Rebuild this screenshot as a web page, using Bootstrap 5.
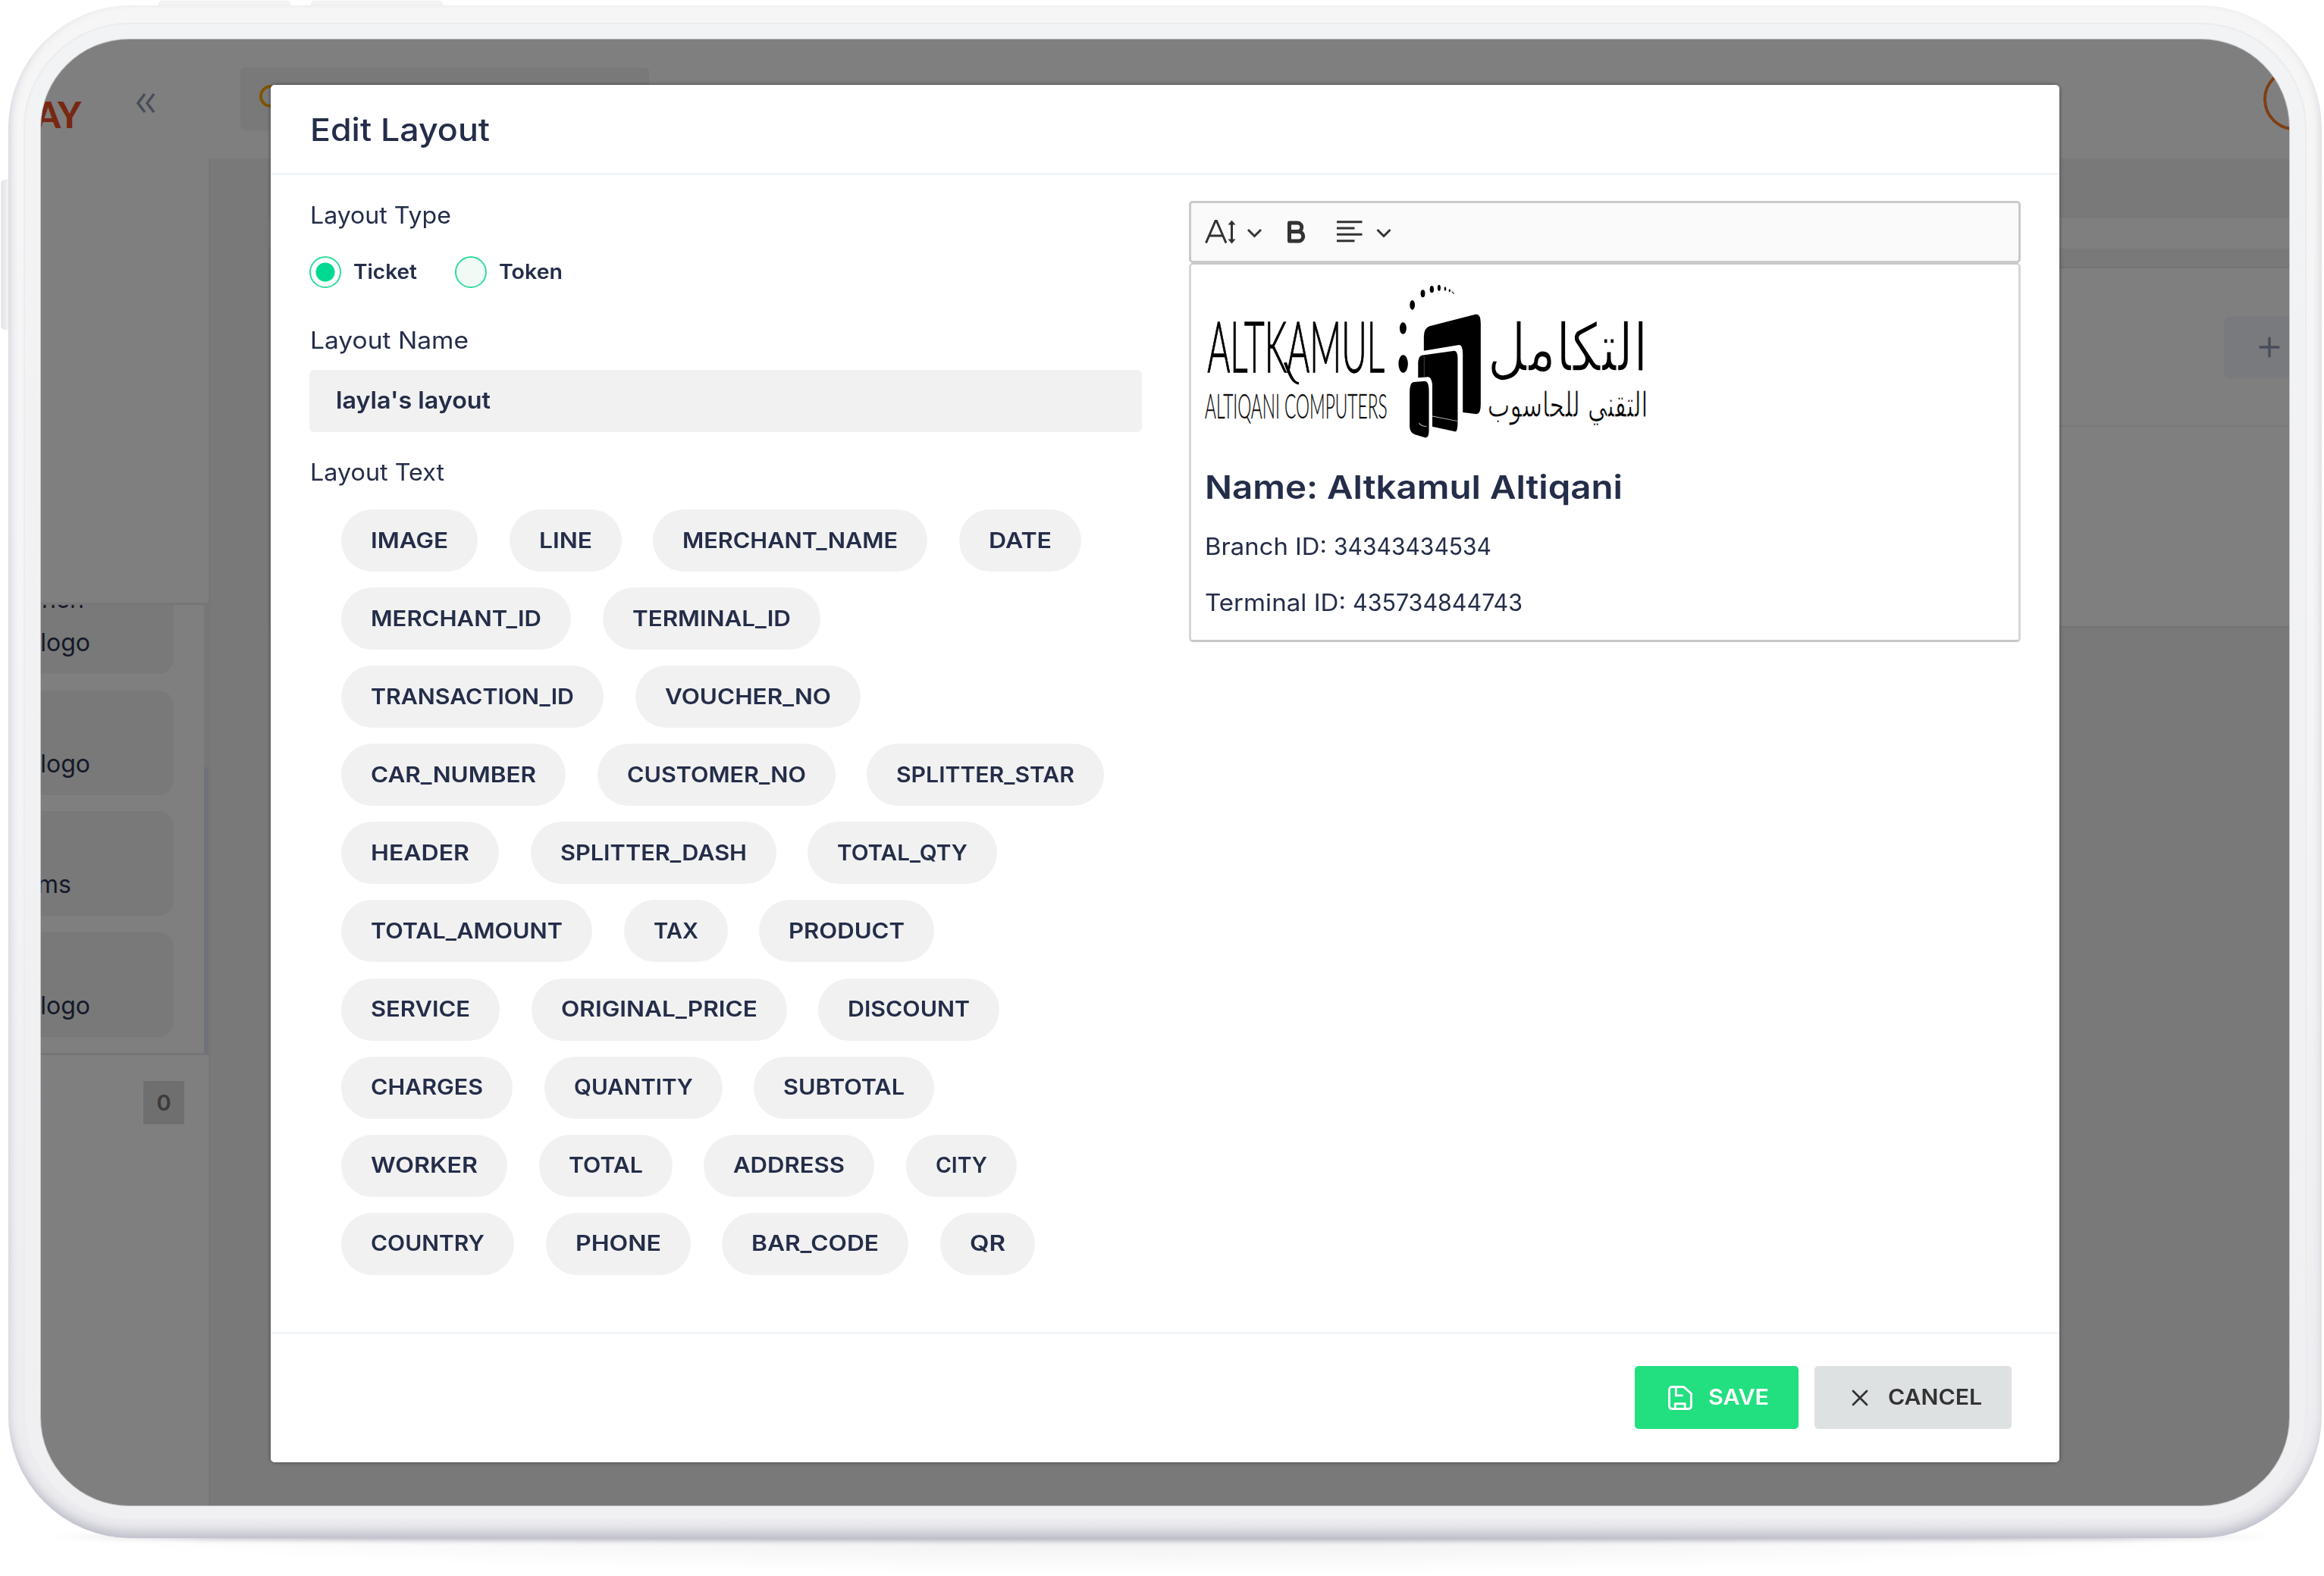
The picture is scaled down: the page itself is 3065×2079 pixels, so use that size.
<!DOCTYPE html>
<html lang="en">
<head>
<meta charset="utf-8">
<title>Edit Layout</title>
<link href="https://cdn.jsdelivr.net/npm/bootstrap@5.3.0/dist/css/bootstrap.min.css" rel="stylesheet">
<style>
  :root { --ink: #242d49; --soft: #f1f1f1; }
  body { width: 3065px; height: 2079px; overflow: hidden; background: #fff; color: var(--ink);
         font-family: Inter, "Noto Sans", sans-serif; position: relative; }

  /* tablet */
  .tablet { position: absolute; left: 11px; top: 7px; width: 3051px; height: 2022px; padding: 23px 20px; border-radius: 162px;
            background: linear-gradient(#f6f6f6, #f4f4f5 50%, #ececf0);
            box-shadow: inset 0 -14px 16px -6px #bcbcc8, inset 8px 0 12px -6px #dcdce4, inset -8px 0 12px -6px #e6e6ec; }
  .bezel { height: 100%; padding: 20px 21px 18px 21px; border: 2px solid #ebecee; border-radius: 140px;
           background: linear-gradient(#f2f3f5, #f0f0f3); }
  .screen { position: relative; height: 100%; border-radius: 116px; overflow: hidden; background: #fff; outline: 1px solid #c2c2c5; }
  .side-key { position: absolute; background: linear-gradient(#f7f7f8, #eeeef1); border: 1px solid #ececef; }
  .key-a { left: 209px; top: 1px; width: 174px; height: 8px; border-radius: 5px 5px 0 0; }
  .key-b { left: 410px; top: 1px; width: 174px; height: 8px; border-radius: 5px 5px 0 0; }
  .key-c { left: 1px; top: 237px; width: 11px; height: 198px; border-radius: 5px 0 0 5px; background: linear-gradient(90deg, #e2e2e8, #f4f4f6); }
  .floor-line { position: absolute; left: 60px; right: 60px; top: 2022px; height: 11px; border-radius: 50%;
                background: linear-gradient(90deg, transparent, #b4b4c0 8%, #b4b4c0 92%, transparent); filter: blur(3px); }
  .floor-glow { position: absolute; left: 60px; right: 60px; top: 2020px; height: 56px;
                background: radial-gradient(ellipse 50% 100% at 50% 0, #f1f1f2, #f6f6f7 50%, #fff); }

  /* page behind the dialog */
  .sidebar { width: 221px; flex: none; }
  .side-top { height: 746px; border-bottom: 3px solid #ececec; padding-right: 70px; }
  .brand { font: 900 47px/50px Lato, sans-serif; color: #ee4f24; margin: 74px 0 0 -7px; }
  .side-list { height: 594px; border-bottom: 3px solid #eaeaea; overflow: hidden; }
  .side-cards { min-width: 0; gap: 21.7px; margin: -47px 40px 0 0; }
  .side-card { height: 138px; flex: none; background: #f2f2f2; border-radius: 0 20px 20px 0; padding: 0 110px 13px 0;
               font-size: 32px; line-height: 57px; color: #2a3352; }
  .side-card.narrow { padding-right: 135px; }
  .side-scroll { width: 6px; flex: none; padding-top: 214px; background: #eee; }
  .side-thumb { height: 380px; background: #dfe4f0; }
  .count { width: 54px; height: 57px; background: #dedede; font-size: 29px; color: #777; margin: 34px 32px 0 auto; }
  .topbar { height: 157px; padding-left: 42px; }
  .search { width: 539px; height: 83px; background: #f2f2f2; border-radius: 5px; padding-left: 25px; margin-top: -1px; }
  .main-area { background: #f2f2f2; padding: 76px 0 0 76px; border-left: 3px solid #eee; }
  .panel-a { height: 43px; background: #fff; border-top: 2px solid #eee; margin-bottom: 24px; }
  .panel-b { height: 476px; background: #fff; border: solid #e6e9f0; border-width: 2px 0 2px 2px; }
  .panel-head { height: 209px; border-bottom: 2px solid #f0f0f0; }
  .add-btn { width: 120px; height: 82px; background: #f3f5fa; border-radius: 8px 0 0 8px; padding-left: 46px; margin-right: -34px; }
  .shade { position: absolute; inset: 0; background: rgba(0,0,0,.5); }

  /* dialog */
  .dialog { --bs-card-border-width: 0; position: absolute; left: 357px; top: 112px; width: 2359px; height: 1817px; border-radius: 7px;
            color: var(--ink); box-shadow: 0 0 5px rgba(20,25,40,.6); }
  .dialog-head { height: 119px; padding: 3px 0 0 52px; background: #fff; border-bottom: 3px solid #f0f4f8; font-size: 41px; font-weight: 500; }
  .dialog-body { padding: 33px 51px 0 51px; gap: 62px; }
  .dialog-foot { height: 172px; border-top: 3px solid #f0f4f8; padding: 42px 63px 0 0; gap: 21px; background: #fff; }
  .col-form { width: 1098px; }
  .field-label { font-size: 31px; line-height: 40px; padding-left: 1px; }
  .radio-row { margin: 34px 0 49px; height: 42px; font-size: 26.5px; font-weight: 600; }
  .form-check-input.pick { width: 42px; height: 42px; margin: 0 16px 0 0; border: 2px solid #30dc9c; background: #f1fbf6; flex: none; }
  .form-check-input.pick.second { margin-left: 50px; }
  .form-check-input.pick:checked { background: radial-gradient(circle, #00d991 12px, #fff 13px); }
  .form-control.name-field { height: 82px; margin: 19px 0 33px; background: var(--soft); border: 0; border-radius: 6px; padding: 0 35px;
                font-size: 31px; font-weight: 600; color: var(--ink); line-height: 80px; }
  .chips { margin: 29px 0 0 42px; width: 1012px; column-gap: 41.6px; row-gap: 21.1px; }
  .chip { height: 82px; border-radius: 41px; background: var(--soft); padding-left: 39px; font-size: 28.5px; font-weight: 600; }
  .btn.act { height: 83px; border: 0; border-radius: 5px; font-size: 28.5px; font-weight: 600; padding: 0; }
  .btn-save { width: 216px; background: #22df80; color: #fff; padding-left: 44px !important; gap: 21px; }
  .btn-cancel { width: 260px; background: #dde1e2; color: #333; padding-left: 48px !important; gap: 25px; }

  /* rich-text editor */
  .col-edit { width: 1097px; padding-top: 1px; }
  .tools { height: 82px; border: 3px solid #cacaca; border-radius: 5px; background: #fafafa; padding-left: 17px; }
  .paper { height: 500px; border: 3px solid #d6d6d6; border-bottom-color: #c8c8c8; border-top: 2px solid #cacaca; border-radius: 5px; padding: 21px 0 0 14px; }
  .brand-art { width: 598.2px; height: 213.3px; display: block; }
  .paper-title { font-size: 43px; line-height: 50px; font-weight: 600; margin: 34px 0 34px 4px; }
  .paper-line { font-size: 31px; line-height: 40px; margin: 0 0 34px 4px; gap: 9px; }
  [data-fit] { display: inline-block; white-space: nowrap; transform-origin: 0 50%; }
</style>
</head>
<body>
  <div class="floor-glow"></div>
  <div class="floor-line"></div>
  <div class="side-key key-a"></div>
  <div class="side-key key-b"></div>
  <div class="side-key key-c"></div>

  <div class="tablet"><div class="bezel"><div class="screen d-flex">
    <aside class="sidebar d-flex flex-column">
      <div class="side-top d-flex justify-content-between align-items-start">
        <div class="brand">AY</div>
        <svg width="25" height="26" viewBox="0 0 25 26" style="margin-top:71px" fill="none" stroke="#8f9ab5" stroke-width="3.4"><path d="M11 1 2 13l9 12M23 1l-9 12 9 12"/></svg>
      </div>
      <div class="side-list d-flex">
        <div class="side-cards d-flex flex-column flex-grow-1">
          <div class="side-card d-flex flex-column justify-content-end align-items-end"><span class="me-2">nch</span><span>logo</span></div>
          <div class="side-card d-flex flex-column justify-content-end align-items-end">logo</div>
          <div class="side-card narrow d-flex flex-column justify-content-end align-items-end">ms</div>
          <div class="side-card d-flex flex-column justify-content-end align-items-end">logo</div>
        </div>
        <div class="side-scroll"><div class="side-thumb"></div></div>
      </div>
      <div class="count d-flex align-items-center justify-content-center fw-semibold">0</div>
    </aside>
    <div class="flex-grow-1 d-flex flex-column">
      <div class="topbar d-flex align-items-center justify-content-between">
        <div class="search d-flex align-items-center"><svg width="36" height="36" viewBox="0 0 36 36" fill="none" stroke="#ffa800" stroke-width="4"><circle cx="15" cy="15" r="13"/><path d="m24 24 10 10"/></svg></div>
        <svg width="35" height="84" viewBox="0 0 35 84" fill="none" stroke="#ff7d2e" stroke-width="4"><circle cx="42" cy="42" r="39"/></svg>
      </div>
      <div class="main-area flex-grow-1">
        <div class="panel-a"></div>
        <div class="panel-b">
          <div class="panel-head d-flex align-items-center justify-content-end">
            <div class="add-btn d-flex align-items-center"><svg width="28" height="28" viewBox="0 0 28 28" stroke="#8f9ab5" stroke-width="3.400" stroke-linecap="round"><path d="M2 14h24M14 2v24"/></svg></div>
          </div>
        </div>
      </div>
    </div>
    <div class="shade"></div>
  </div></div></div>

  <div class="dialog card">
    <div class="dialog-head card-header d-flex align-items-center"><span data-fit="237">Edit Layout</span></div>
    <div class="dialog-body card-body d-flex">
      <div class="col-form">
        <div class="field-label"><span data-fit="186">Layout Type</span></div>
        <div class="radio-row d-flex align-items-center">
          <input class="form-check-input pick" type="radio" name="kind" checked><span data-fit="84">Ticket</span>
          <input class="form-check-input pick second" type="radio" name="kind"><span data-fit="84">Token</span>
        </div>
        <div class="field-label"><span data-fit="209">Layout Name</span></div>
        <div class="form-control name-field"><span data-fit="204">layla's layout</span></div>
        <div class="field-label"><span data-fit="177">Layout Text</span></div>
        <div class="chips d-flex flex-wrap" id="chips"></div>
      </div>
      <div class="col-edit">
        <div class="tools d-flex align-items-center">
          <svg width="260" height="34" viewBox="1588 289 260 34" fill="none" stroke="#333" stroke-width="3">
            <path d="m1590.5 320.500 12.500-29h1.500l12.500 29M1595 311h17.500M1624.500 293v26"/>
            <path d="m1624.500 290.500 5 6h-10zM1624.500 321.500l5-6h-10z" fill="#333" stroke="none"/>
            <path d="m1646 303 8.500 8.500 8.500-8.500M1816.500 303l8.500 8.500 8.500-8.500"/>
            <path d="M1700.500 294h10.500a5.600 5.600 0 0 1 0 11.500h-10.500zM1700.500 305.500h12a6 6 0 0 1 0 12.500h-12z" stroke-width="5" stroke-linejoin="round"/>
            <path d="M1763 292.700h33.500M1763 301h23.500M1763 309.300h33.500M1763 317.700h23.500"/>
          </svg>
        </div>
        <div class="paper">
          <svg class="brand-art" viewBox="100 390 1340 640" preserveAspectRatio="none">
            <g fill="#000">
              <ellipse cx="695" cy="720" rx="14" ry="35"/><ellipse cx="694.500" cy="579" rx="10" ry="23"/>
              <ellipse cx="722" cy="487" rx="7.500" ry="19"/><ellipse cx="753" cy="442" rx="6.500" ry="15"/>
              <ellipse cx="779.500" cy="425" rx="6" ry="14"/><ellipse cx="801" cy="419" rx="4.500" ry="12"/>
              <ellipse cx="819" cy="423" rx="3" ry="8"/><ellipse cx="832" cy="430" rx="2.500" ry="6"/>
              <path d="m837 430 11 14-7-4z"/>
              <path d="M756 668V610Q757 578 773 571L908 524Q924 521 924 560V880Q924 918 912 919L871 912V690Q872 645 860 645Z"/>
              <path d="M739 775V715Q740 690 750 686L846 668Q856 668 856 700V950Q856 990 848 988L781 968V800Q778 772 768 772Z"/>
              <path d="M714 830Q715 793 726 792L760 788Q771 790 771 830V985Q771 1014 760 1012L728 999Q714 990 714 965Z"/>
              <path d="M781 927 856 947M742 955q8 14 22 12" stroke="#bbb" stroke-width="3" fill="none"/>
              <path d="M757 690v85" stroke="#555" stroke-width="2"/>
              <g font-family="Lato, sans-serif" font-weight="300">
                <text x="116" y="753" font-size="276" stroke="#000" stroke-width="4" textLength="524" lengthAdjust="spacingAndGlyphs">ALTKAMUL</text>
                <text x="109" y="936" font-size="134" stroke="#333" stroke-width="1" textLength="539" lengthAdjust="spacingAndGlyphs">ALTIQANI COMPUTERS</text>
              </g>
              <path d="M346 715C356 745 366 797 387 797" fill="none" stroke="#000" stroke-width="9"/>
              <g font-family="DejaVu Sans, sans-serif" stroke="#fff">
                <text x="944" y="746" font-size="262" stroke-width="5" textLength="474" lengthAdjust="spacingAndGlyphs">التكامل</text>
                <text x="944" y="930" font-size="140" stroke-width="3" textLength="474" lengthAdjust="spacingAndGlyphs">التقني للحاسوب</text>
              </g>
            </g>
          </svg>
          <h2 class="paper-title"><span data-fit="551">Name: Altkamul Altiqani</span></h2>
          <p class="paper-line d-flex"><span data-fit="161">Branch ID:</span><span data-fit="208">34343434534</span></p>
          <p class="paper-line d-flex"><span data-fit="186">Terminal ID:</span><span data-fit="224">435734844743</span></p>
        </div>
      </div>
    </div>
    <div class="dialog-foot card-footer d-flex justify-content-end">
      <button class="btn act btn-save d-flex align-items-center">
        <svg width="32" height="32" viewBox="0 0 31 31" fill="none" stroke="#fff" stroke-width="2.800" stroke-linejoin="round"><path d="M5.500 1.500H20L29.500 10V26q0 3.500-3.500 3.500H5Q1.500 29.500 1.500 26V5.500q0-4 4-4zM10 2v10.500h9M9 29v-6h12.500v6"/></svg>
        <span data-fit="80">SAVE</span>
      </button>
      <button class="btn act btn-cancel d-flex align-items-center">
        <svg width="24" height="24" viewBox="0 0 24 24" stroke="#333" stroke-width="2.800" stroke-linecap="round"><path d="m3 3 18 18M21 3 3 21"/></svg>
        <span data-fit="124">CANCEL</span>
      </button>
    </div>
  </div>

<script src="https://cdn.jsdelivr.net/npm/bootstrap@5.3.0/dist/js/bootstrap.bundle.min.js"></script>
<script>
  // label and pill width of every placeholder, in order
  const fields = [["IMAGE",180],["LINE",148],["MERCHANT_NAME",362],["DATE",161],["MERCHANT_ID",303],["TERMINAL_ID",287],
    ["TRANSACTION_ID",346],["VOUCHER_NO",297],["CAR_NUMBER",296],["CUSTOMER_NO",314],["SPLITTER_STAR",313],["HEADER",208],
    ["SPLITTER_DASH",324],["TOTAL_QTY",250],["TOTAL_AMOUNT",331],["TAX",137],["PRODUCT",231],["SERVICE",209],["ORIGINAL_PRICE",337],
    ["DISCOUNT",239],["CHARGES",226],["QUANTITY",235],["SUBTOTAL",238],["WORKER",219],["TOTAL",176],["ADDRESS",225],["CITY",146],
    ["COUNTRY",228],["PHONE",191],["BAR_CODE",246],["QR",125]];
  document.getElementById("chips").innerHTML = fields.map(([t, w]) =>
    `<div class="chip d-flex align-items-center" style="width:${w}px"><span data-fit="${w - 78}">${t}</span></div>`).join("");
  // widen each label to its set width
  document.querySelectorAll("[data-fit]").forEach(el => {
    const natural = el.getBoundingClientRect().width;
    el.style.transform = `scaleX(${el.dataset.fit / natural})`;
    el.style.marginRight = el.dataset.fit - natural + "px";
  });
</script>
</body>
</html>
